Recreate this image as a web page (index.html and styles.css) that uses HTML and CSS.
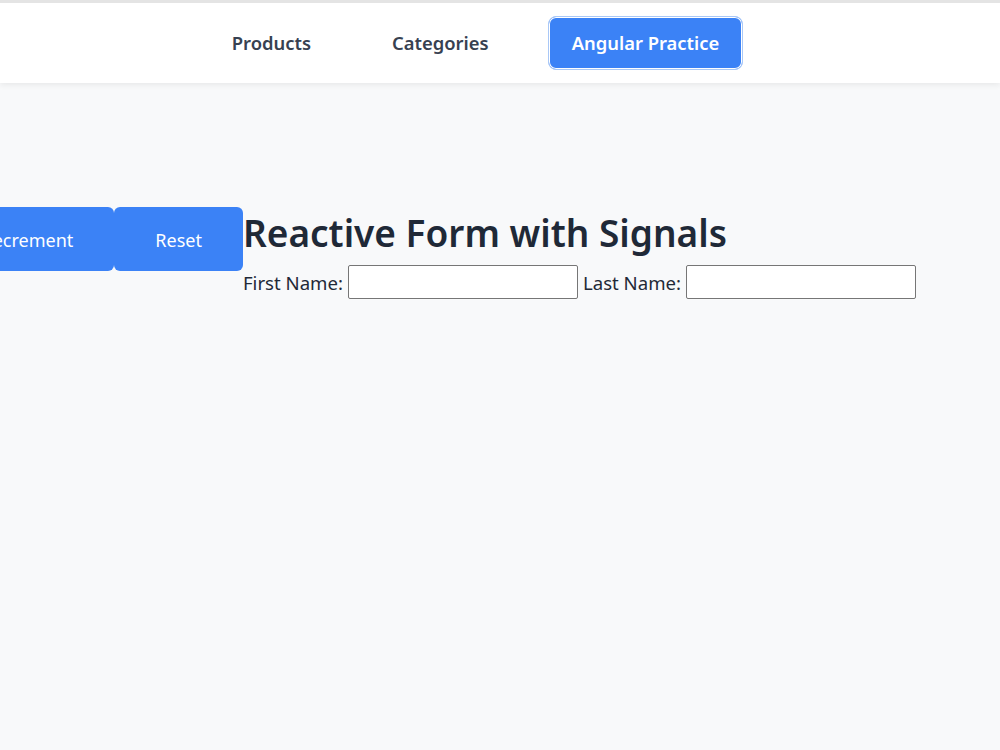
FILE: index.html
```html
<!DOCTYPE html>
<html lang="en">
<head>
<meta charset="utf-8">
<title>Angular Practice</title>
<link rel="stylesheet" href="styles.css">
</head>
<body>
<header class="topbar">
  <nav class="nav">
    <a class="nav-link" href="#">Products</a>
    <a class="nav-link" href="#">Categories</a>
    <a class="nav-link nav-link-active" href="#">Angular Practice</a>
  </nav>
</header>
<main class="practice">
  <div class="counter">
    <button class="btn" type="button">Increment</button>
    <button class="btn" type="button">Decrement</button>
    <button class="btn" type="button">Reset</button>
  </div>
  <section class="signal-form">
    <h1 class="signal-form-title">Reactive Form with Signals</h1>
    <form class="signal-form-row">
      <label>First Name: <input type="text"></label>
      <label>Last Name: <input type="text"></label>
    </form>
  </section>
</main>
</body>
</html>
```
FILE: styles.css
```css
html, body {
  margin: 0;
  padding: 0;
}

body {
  background: #f8f9fa;
  border-top: 3px solid #e4e4e4;
  font-family: "Noto Sans", "Open Sans", sans-serif;
  color: #1f2937;
  overflow: hidden;
  height: 747px;
}

.topbar {
  background: #ffffff;
  height: 80px;
  box-shadow: 0 2px 6px rgba(0, 0, 0, 0.07);
  display: flex;
  align-items: center;
  justify-content: center;
  padding-right: 47px;
}

.nav {
  display: flex;
  align-items: center;
  gap: 37px;
}

.nav-link {
  text-decoration: none;
  color: #374151;
  font-size: 18.4px;
  font-weight: 600;
  padding: 14px 21px;
  border-radius: 8px;
  border: 1px solid transparent;
  line-height: 24px;
}

.nav-link-active {
  padding: 14px 23px;
  background: #3b82f6;
  color: #ffffff;
  border-color: #a9c8f7;
  box-shadow: inset 0 0 0 1px #ffffff;
}

.practice {
  margin-top: 124px;
  display: flex;
  align-items: flex-start;
  justify-content: flex-end;
  padding-right: 84px;
  overflow: hidden;
}

.counter {
  display: flex;
  flex-shrink: 0;
}

.btn {
  height: 64px;
  flex-shrink: 0;
  background: #3b82f6;
  color: #ffffff;
  border: none;
  border-radius: 6px;
  font-family: inherit;
  font-size: 18px;
  padding: 2px 41px 0;
  white-space: nowrap;
}

.signal-form {
  flex-shrink: 0;
}

.signal-form-title {
  margin: 0 0 6px;
  font-size: 37px;
  line-height: 52px;
  font-weight: 600;
  color: #1f2937;
  white-space: nowrap;
}

.signal-form-row {
  display: flex;
  gap: 5px;
  font-size: 18.6px;
  white-space: nowrap;
}

.signal-form-row label {
  display: flex;
  align-items: center;
  gap: 5px;
}

.signal-form-row input {
  width: 230px;
  height: 34px;
  box-sizing: border-box;
  border: 1px solid #767676;
  border-radius: 2px;
  background: #ffffff;
  margin: 0;
}
```
